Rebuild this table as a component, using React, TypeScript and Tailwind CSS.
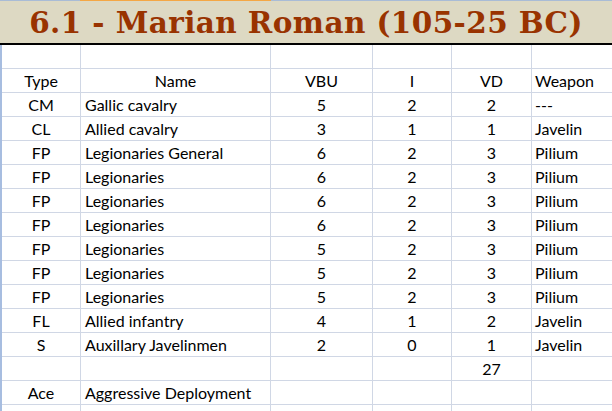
const rows: [string, string, string, string, string, string][] = [
  ['', '', '', '', '', ''],
  ['Type', 'Name', 'VBU', 'I', 'VD', 'Weapon'],
  ['CM', 'Gallic cavalry', '5', '2', '2', '---'],
  ['CL', 'Allied cavalry', '3', '1', '1', 'Javelin'],
  ['FP', 'Legionaries General', '6', '2', '3', 'Pilium'],
  ['FP', 'Legionaries', '6', '2', '3', 'Pilium'],
  ['FP', 'Legionaries', '6', '2', '3', 'Pilium'],
  ['FP', 'Legionaries', '6', '2', '3', 'Pilium'],
  ['FP', 'Legionaries', '5', '2', '3', 'Pilium'],
  ['FP', 'Legionaries', '5', '2', '3', 'Pilium'],
  ['FP', 'Legionaries', '5', '2', '3', 'Pilium'],
  ['FL', 'Allied infantry', '4', '1', '2', 'Javelin'],
  ['S', 'Auxillary Javelinmen', '2', '0', '1', 'Javelin'],
  ['', '', '', '', '27', ''],
  ['Ace', 'Aggressive Deployment', '', '', '', ''],
  ['', '', '', '', '', ''],
]

export default function App() {
  return (
    <div className="w-[612px] h-[411px] overflow-hidden bg-white" style={{ fontFamily: 'Lato, "Liberation Sans", sans-serif' }}>
      {/* column header edge */}
      <div className="flex h-[1px]">
        <div className="w-[80px] bg-[#a9bcd6]" />
        <div className="w-[191px] bg-[#f4a745]" />
        <div className="flex-1 bg-[#a9bcd6]" />
      </div>
      <div className="h-[42px] bg-[#ddd9c3] flex items-center justify-center pt-[1px]">
        <h1
          className="text-[29.5px] font-bold text-[#993300] leading-none tracking-[0.4px]"
          style={{ fontFamily: '"DejaVu Serif", serif' }}
        >
          6.1 - Marian Roman (105-25 BC)
        </h1>
      </div>
      <div className="h-[2px] bg-black" />
      <div className="border-l-2 border-[#a7bde0]">
        {rows.map((r, i) => (
          <div
            key={i}
            className="grid grid-cols-[79px_190px_102px_79px_80px_80px] h-[24px] border-b border-[#d0d7e5] text-[16px] text-black"
          >
            <div className="border-r border-[#d0d7e5] flex items-center justify-center">{r[0]}</div>
            <div
              className={
                'border-r border-[#d0d7e5] flex items-center ' +
                (i === 1 ? 'justify-center' : 'pl-[4px]')
              }
            >
              {r[1]}
            </div>
            <div className="border-r border-[#d0d7e5] flex items-center justify-center">{r[2]}</div>
            <div className="border-r border-[#d0d7e5] flex items-center justify-center">{r[3]}</div>
            <div className="border-r border-[#d0d7e5] flex items-center justify-center">{r[4]}</div>
            <div className="flex items-center pl-[3px]">{r[5]}</div>
          </div>
        ))}
      </div>
    </div>
  )
}
